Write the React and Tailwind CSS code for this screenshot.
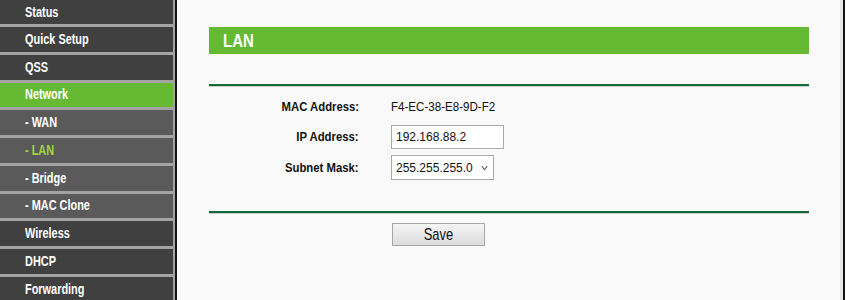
import React from "react";

const menu = [
  { label: "Status", type: "main", first: true },
  { label: "Quick Setup", type: "main" },
  { label: "QSS", type: "main" },
  { label: "Network", type: "active" },
  { label: "- WAN", type: "sub" },
  { label: "- LAN", type: "subactive" },
  { label: "- Bridge", type: "sub" },
  { label: "- MAC Clone", type: "sub" },
  { label: "Wireless", type: "main" },
  { label: "DHCP", type: "main" },
  { label: "Forwarding", type: "main" },
];

function MenuItem({ item }) {
  const bg =
    item.type === "active"
      ? "bg-[#66b933]"
      : item.type === "sub" || item.type === "subactive"
      ? "bg-[#5a5a5a]"
      : "bg-[#404040]";
  const color = item.type === "subactive" ? "text-[#a3d63c]" : "text-white";
  return (
    <div
      className={`${bg} ${color} ${item.first ? "h-[24px]" : "h-[24.78px] mt-[3px]"} flex items-center pl-[25px] shrink-0 text-[14px] font-bold whitespace-nowrap`}
    >
      <span className="inline-block origin-left scale-x-[0.78]">{item.label}</span>
    </div>
  );
}

function GreenRule() {
  return (
    <div className="ml-[32px] w-[600px]">
      <div className="h-[2px] bg-[#136b3b]" />
      <div className="h-[1px] bg-[#c5d2ca]" />
    </div>
  );
}

function Label({ children }) {
  return (
    <div className="w-[182px] text-right text-[13px] font-bold text-[#111] whitespace-nowrap">
      <span className="inline-block origin-right scale-x-[0.87]">{children}</span>
    </div>
  );
}

export default function App() {
  return (
    <div className="w-[846px] h-[300px] flex bg-white overflow-hidden font-['Liberation_Sans',Arial,sans-serif]">
      {/* Sidebar */}
      <div className="w-[175px] h-full bg-[#a3a3a3] flex flex-col shrink-0">
        <div className="w-[173px] flex flex-col">
          {menu.map((m) => (
            <MenuItem key={m.label} item={m} />
          ))}
        </div>
      </div>
      <div className="w-[2px] h-full bg-[#141414] shrink-0" />

      {/* Content */}
      <div className="flex-1 h-full bg-[#f9f9f9] flex flex-col">
        <div className="mt-[27px] ml-[32px] w-[600px] h-[27px] bg-[#66b933] flex items-center pl-[14px]">
          <span className="inline-block origin-left scale-x-[0.83] text-white font-bold text-[18px] leading-none">
            LAN
          </span>
        </div>

        <div className="mt-[30px]">
          <GreenRule />
        </div>

        <div className="mt-[8px] flex flex-col gap-[6px]">
          <div className="flex items-center h-[24px]">
            <Label>MAC Address:</Label>
            <div className="ml-[32px] text-[12px] text-[#111] whitespace-nowrap">
              <span className="inline-block origin-left scale-x-[0.965]">F4-EC-38-E8-9D-F2</span>
            </div>
          </div>
          <div className="flex items-center h-[24px]">
            <Label>IP Address:</Label>
            <div className="ml-[32px] w-[113px] h-[24px] border border-[#a9a9a9] bg-white flex items-center pl-[4px] text-[12px] text-[#111]">
              192.168.88.2
            </div>
          </div>
          <div className="flex items-center h-[25px]">
            <Label>Subnet Mask:</Label>
            <div className="ml-[32px] w-[103px] h-[25px] border border-[#a9a9a9] bg-white flex items-center justify-between pl-[4px] pr-[5px] text-[12px] text-[#111]">
              <span>255.255.255.0</span>
              <svg width="7" height="6" viewBox="0 0 7 6" fill="none">
                <path d="M0.8 1 L3.5 4.8 L6.2 1" stroke="#666" strokeWidth="1.2" />
              </svg>
            </div>
          </div>
        </div>

        <div className="mt-[31px]">
          <GreenRule />
        </div>

        <div className="mt-[9px] ml-[215px]">
          <div className="w-[93px] h-[23px] border border-[#a6a6a6] bg-gradient-to-b from-[#f5f5f5] to-[#dcdcdc] flex items-center justify-center text-[17px] text-[#111] leading-none">
            <span className="inline-block scale-x-[0.76]">Save</span>
          </div>
        </div>
      </div>

      <div className="w-[3px] h-full bg-[#e6e6e6] shrink-0" />
      <div className="w-[2px] h-full bg-[#141414] shrink-0" />
      <div className="w-[1px] h-full bg-white shrink-0" />
    </div>
  );
}
